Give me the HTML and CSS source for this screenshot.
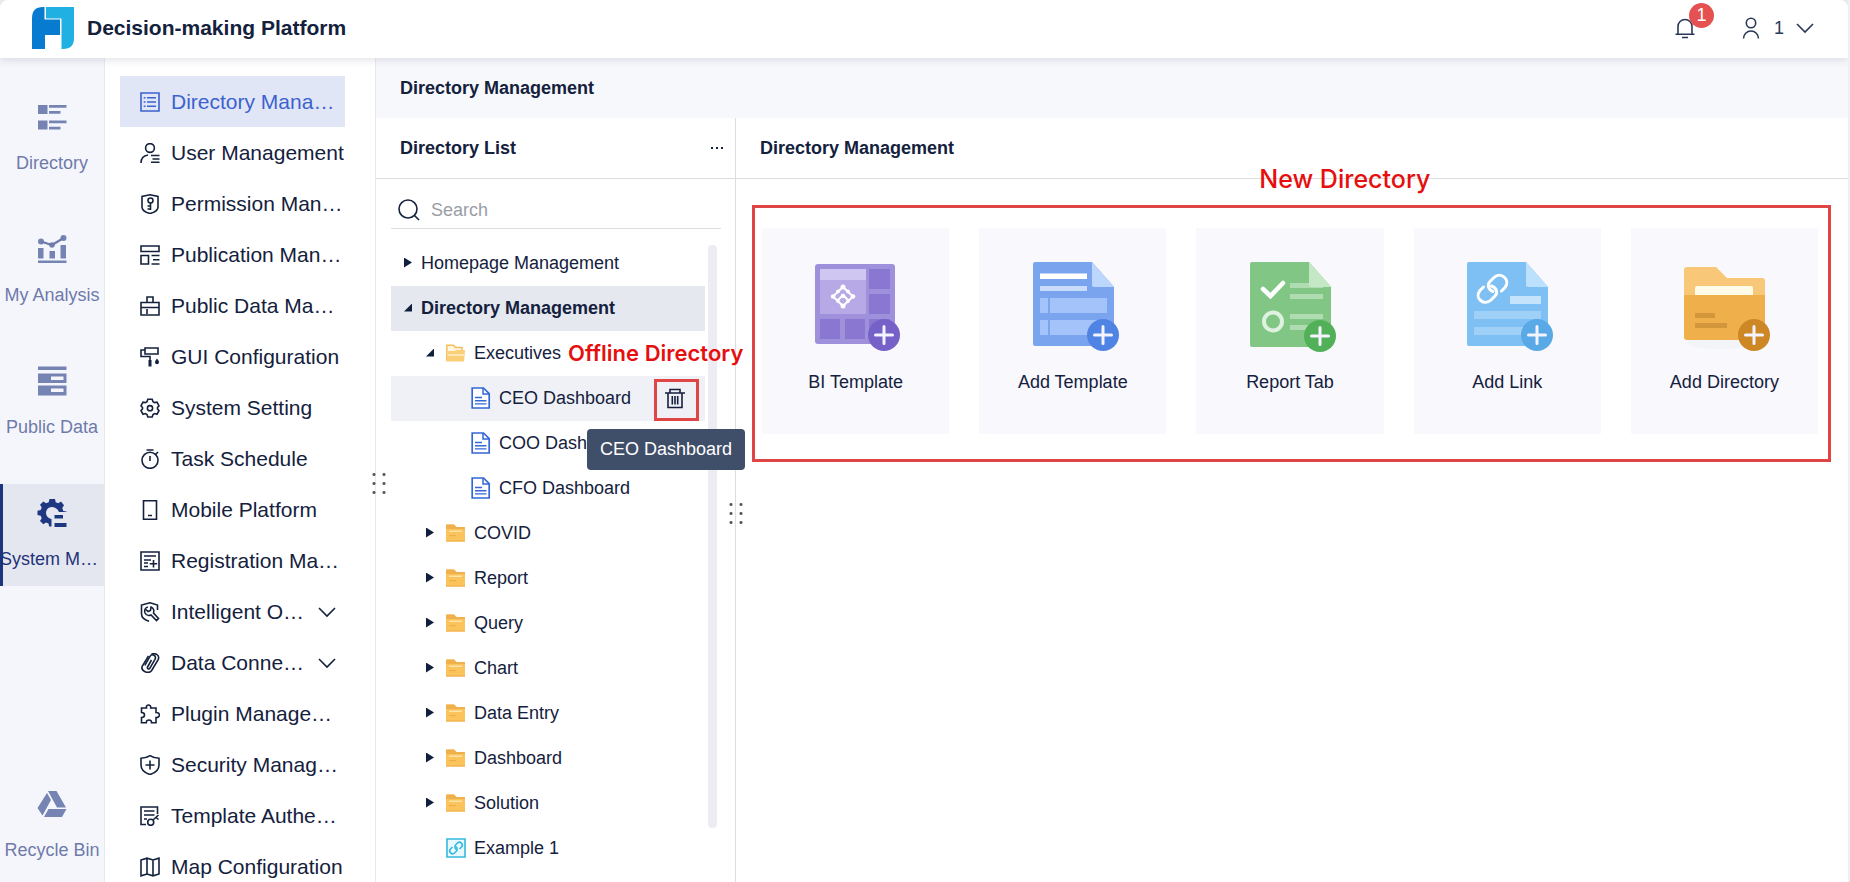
FILE: index.html
```
<!DOCTYPE html>
<html lang="en">
<head>
<meta charset="utf-8">
<title>Decision-making Platform</title>
<meta name="viewport" content="width=device-width, initial-scale=1">
<link rel="stylesheet" href="styles.css">
</head>
<body>
<svg class="defs" aria-hidden="true">
  <symbol id="chevron" viewBox="0 0 18 18"><path d="M1 5l8 8 8-8"/></symbol>
  <symbol id="folder" viewBox="0 0 20 18">
    <path d="M0 1.5Q0 .5 1 .5H8L10.500 3H19V17.500H0Z" fill="#fbc35c"/>
    <path d="M0 1.500Q0 .5 1 .5H8L10.500 3H19V5H0Z" fill="#efb04e"/>
    <path d="M3 6.500H16V8H3Z" fill="#fee3a6"/>
    <path d="M3 11H10V12.200H3ZM0 16.500H19V17.500H0Z" fill="#f0ae48"/>
  </symbol>
  <symbol id="doc" viewBox="0 0 20 22">
    <path d="M1.200 1H12.500L18.200 6.700V21H1.200Z" fill="#fff" stroke="#3567d6" stroke-width="1.700"/>
    <path d="M12 1V7H18.200" fill="none" stroke="#3567d6" stroke-width="1.500"/>
    <path d="M4 10.500H11M4 13.700H15.500M4 16.900H15.500" stroke="#3567d6" stroke-width="1.400"/>
  </symbol>
  <symbol id="plus" viewBox="0 0 34 34">
    <circle cx="17" cy="17" r="16"/>
    <path d="M17 8.500V25.500M8.500 17H25.500" stroke="#f3f4ff" stroke-width="3" stroke-linecap="round"/>
  </symbol>
</svg>

<div class="app">
  <header class="header">
    <svg class="logo" viewBox="0 0 42 42" aria-hidden="true">
      <path d="M11 0H12.500V12.500H28V28H13V42H0V11Q0 0 11 0Z" fill="#067bd0"/>
      <path d="M14 0H42V31Q42 42 31 42H29.500V11.500H14Z" fill="#20b0e2"/>
    </svg>
    <h1 class="brand">Decision-making Platform</h1>
    <button class="bell" type="button" aria-label="Notifications">
      <svg class="icon22 line" viewBox="0 0 22 22"><path d="M4 17V9.500a7 7 0 0 1 14 0V17M1.500 17.200H20.500M8 20.500H14"/></svg>
      <span class="badge">1</span>
    </button>
    <button class="account" type="button">
      <svg class="icon22 line" viewBox="0 0 22 22"><circle cx="11" cy="6" r="4.700"/><path d="M3.500 21.500a7.500 7.500 0 0 1 15 0"/></svg>
      <span>1</span>
      <svg class="icon18 line"><use href="#chevron"/></svg>
    </button>
  </header>

  <div class="body">
    <nav class="rail" aria-label="Modules">
      <button class="rail-item" type="button">
        <svg viewBox="0 0 30 30"><path d="M1 3H10.500V12H1ZM12 3H29.500V5.800H12ZM12 9H23.500V11.800H12ZM1 18.500H10.500V27.500H1ZM12 18.500H29.500V21.300H12ZM12 24.700H23.500V27.500H12Z"/></svg>
        <span class="rail-label">Directory</span>
      </button>
      <button class="rail-item" type="button">
        <svg viewBox="0 0 30 30"><path d="M1 14H6.500V24.500H1ZM12.500 17H18V24.500H12.500ZM23.500 11H29V24.500H23.500ZM1 26.500H29.500V29H1Z"/><circle cx="4" cy="7.500" r="3"/><circle cx="15" cy="11" r="2.800"/><circle cx="26.500" cy="4" r="3"/><path d="M4 7.500L15 11L26.500 4" fill="none" stroke="currentColor" stroke-width="2.200"/></svg>
        <span class="rail-label">My Analysis</span>
      </button>
      <button class="rail-item" type="button">
        <svg viewBox="0 0 30 30"><path fill-rule="evenodd" d="M1 .5H29.500V4H1ZM1 7.500H29.500V17H1ZM14 10.500V14H26.500V10.500ZM1 19.500H29.500V29.500H1ZM14 22.500V26H26.500V22.500Z"/></svg>
        <span class="rail-label">Public Data</span>
      </button>
      <button class="rail-item selected" type="button">
        <svg viewBox="0 0 30 30">
          <path d="M12.500 1H18L18.700 4.200L21.200 5.300L24 3.600L27 7.200L25.300 10L26.300 13L29.500 13.500V14H22C20.500 10.500 17.500 9 15 9C11.500 9 9 11.500 9 15C9 18 11 20.300 14.500 21V28.500H12.200L11.500 25.600L9 24.600L6.300 26.300L3 23L4.700 20.300L3.700 17.700L.5 17V12.700L3.700 12L4.700 9.500L3 6.700L6.300 3.500L9 5.200L11.700 4.200Z"/>
          <path d="M17.500 17H26V20.500H17.500ZM17.500 25H29.500V29H17.500Z"/>
        </svg>
        <span class="rail-label">System Management</span>
      </button>
      <button class="rail-item last" type="button">
        <svg viewBox="0 0 30 30"><path d="M11 2H19.500L29 18.500H20ZM10 4L14 11L5.500 26.500L.5 19ZM11.500 20H29.500L25 28H7Z"/></svg>
        <span class="rail-label">Recycle Bin</span>
      </button>
    </nav>

    <nav class="menu" aria-label="System management">
      <button class="menu-item selected" type="button">
        <svg class="line" viewBox="0 0 20 20"><path d="M1 1H19V19H1ZM7 5.700H16M7 10H16M7 14.300H16M3.700 5.700H5.500M3.700 10H5.500M3.700 14.300H5.500"/></svg>
        <span>Directory Management</span>
      </button>
      <button class="menu-item" type="button">
        <svg class="line" viewBox="0 0 20 20"><circle cx="10" cy="5" r="4.400"/><path d="M1 20C1 15.500 3.500 12.700 8 12M11 12.500H19.500M12.500 16H19.500M11 19.300H19.500"/></svg>
        <span>User Management</span>
      </button>
      <button class="menu-item" type="button">
        <svg class="line" viewBox="0 0 20 20"><path d="M10 .8L18 2.500V13C18 16 14 18.500 10 19.500C6 18.500 2 16 2 13V2.500Z"/><circle cx="10.500" cy="6.500" r="2.500"/><path d="M10.500 9V16M10.500 12H7.500M10.500 15H7.500"/></svg>
        <span>Permission Management</span>
      </button>
      <button class="menu-item" type="button">
        <svg class="line" viewBox="0 0 20 20"><path d="M1 1H19V6.500H1ZM1 10.500H8.500V19H1ZM11.500 10.500H19.500M13 14.700H19.500M11.500 19H19.500"/></svg>
        <span>Publication Management</span>
      </button>
      <button class="menu-item" type="button">
        <svg class="line" viewBox="0 0 20 20"><path d="M7 6.500V1H13V6.500M1 6.500H19V19H1ZM1 11.500H19M7 13V18"/></svg>
        <span>Public Data Management</span>
      </button>
      <button class="menu-item" type="button">
        <svg class="line" viewBox="0 0 20 20"><path d="M5 1H18V7H5ZM5 3H1V9.500H10V13"/><path class="solid" d="M8.500 13H11.500V19.500H8.500ZM17 11.500C18 13 19 14 19 15.200A1.900 1.900 0 0 1 15 15.200C15 14 16 13 17 11.500Z"/></svg>
        <span>GUI Configuration</span>
      </button>
      <button class="menu-item" type="button">
        <svg class="line" viewBox="0 0 20 20"><path d="M7.800 1.300H12.200L13 3.700L14.600 4.600L17 4.100L19 7.800L17.500 9.500V11L19 12.600L17 16.200L14.600 15.500L13 16.500L12.200 19H7.800L7 16.500L5.400 15.500L3 16.200L1 12.600L2.500 11V9.500L1 7.800L3 4.100L5.400 4.600L7 3.700Z"/><circle cx="10" cy="10.200" r="2.600"/></svg>
        <span>System Setting</span>
      </button>
      <button class="menu-item" type="button">
        <svg class="line" viewBox="0 0 20 20"><circle cx="10" cy="11.300" r="8"/><path d="M6.500 1H13.500M10 7V12M15.500 5.500L18 3"/></svg>
        <span>Task Schedule</span>
      </button>
      <button class="menu-item" type="button">
        <svg class="line" viewBox="0 0 20 20"><path d="M3.500 .8H16.500V19.200H3.500ZM8 15.500H12"/></svg>
        <span>Mobile Platform</span>
      </button>
      <button class="menu-item" type="button">
        <svg class="line" viewBox="0 0 20 20"><path d="M1 1H19V19H1ZM4 5H16M4 9H11M4 12H8M4 15.500H8M13.500 9V16.500M9.700 12.800H17.200"/></svg>
        <span>Registration Management</span>
      </button>
      <button class="menu-item" type="button" aria-expanded="false">
        <svg class="line" viewBox="0 0 20 20"><path d="M17.500 8V3L10 .8L1.500 3V12C1.500 15.500 5 18 9 19.300"/><path d="M8 5C5 5.500 4 8.500 5 11C6 13 8.500 14 11 13L16.500 18.500L18.500 16.500L13.500 11C14.500 8.500 13.500 6 11 5L10.500 8.500L8 9.500L6 7.500"/></svg>
        <span>Intelligent Operations</span>
        <svg class="icon18 line arrow"><use href="#chevron"/></svg>
      </button>
      <button class="menu-item" type="button" aria-expanded="false">
        <svg class="line" viewBox="0 0 20 20"><path d="M11.500 7L7.500 14C6.700 15.500 9 16.800 9.900 15.200L15 6.300C17 2.500 11.800 .2 10 3.300L4.800 12.300" /><path d="M11.500 1.500C14.500 -.8 20 2 18.300 6.300L11.500 17.700C8.500 21.500 .5 18 2.200 13.300L8.500 3"/></svg>
        <span>Data Connection</span>
        <svg class="icon18 line arrow"><use href="#chevron"/></svg>
      </button>
      <button class="menu-item" type="button">
        <svg class="line" viewBox="0 0 20 20"><path d="M1.500 4H6.500C5.500 0 11.500 0 10.700 4H16V8.500C20.500 8 20.500 14 16 13.500V18.700H11.500C12 15 6 15 6.300 18.700H1.500V13.500C5.500 13.500 5.500 8.500 1.500 8.500Z"/></svg>
        <span>Plugin Management</span>
      </button>
      <button class="menu-item" type="button">
        <svg class="line" viewBox="0 0 20 20"><path d="M10 .7C12.500 2.500 15.500 3.300 19 3.300V10C19 15 15 18 10 19.500C5 18 1 15 1 10V3.300C4.500 3.300 7.500 2.500 10 .7ZM10 5.500V14.500M5.500 10H14.500"/></svg>
        <span>Security Management</span>
      </button>
      <button class="menu-item" type="button">
        <svg class="line" viewBox="0 0 20 20"><path d="M17.500 8V1H1V18.500H6M4 5H14.500M4 9H14.500M4 13H7"/><circle cx="10.700" cy="16.300" r="3"/><path d="M13 14L18.500 9M16 11.500L18.500 13.500"/></svg>
        <span>Template Authentication</span>
      </button>
      <button class="menu-item" type="button">
        <svg class="line" viewBox="0 0 20 20"><path d="M1 3L7 1.200L13 3L19 1.200V17L13 18.800L7 17L1 18.800ZM7 1.200V17M13 3V18.800"/></svg>
        <span>Map Configuration</span>
      </button>
      <span class="grip" aria-hidden="true"></span>
    </nav>

    <div class="content">
      <div class="tabbar">Directory Management</div>
      <div class="panels">
        <section class="list">
          <header class="panel-head">
            <h2>Directory List</h2>
            <button class="more" type="button" aria-label="More"><i></i><i></i><i></i></button>
          </header>
          <label class="search">
            <svg class="line" viewBox="0 0 22 22" aria-label="Search"><circle cx="10" cy="10" r="9"/><path d="M16.500 16.500L21 21"/></svg>
            <input type="text" placeholder="Search">
          </label>
          <div class="scroll">
            <ul class="tree">
              <li class="row"><i class="caret"></i>Homepage Management</li>
              <li class="row current"><i class="caret open"></i>Directory Management</li>
              <li class="row level2"><i class="caret open"></i>
                <svg class="folder" viewBox="0 0 20 18"><path d="M.8 17V1.200H7.500L9.500 3.500H16V7" fill="#fff6df" stroke="#f5bd5c" stroke-width="1.500"/><path d="M.5 17.500L2.500 7H9L10 6H19L18 17.500Z" fill="#fbcf77"/><path d="M2 11H18" stroke="#fff1cb" stroke-width="1.500"/></svg>Executives
                <span class="note note-offline">Offline Directory</span>
              </li>
              <li class="row level3 hover"><svg class="doc"><use href="#doc"/></svg>CEO Dashboard
                <button class="trash" type="button" aria-label="Take offline"><svg class="line" viewBox="0 0 22 22"><path d="M1 5H21M6 5V1.500H16V5M4 5V19.500H18V5M8.300 8V16.500M11 8V16.500M13.700 8V16.500"/></svg></button>
                <span class="tooltip" role="tooltip">CEO Dashboard</span>
              </li>
              <li class="row level3"><svg class="doc"><use href="#doc"/></svg>COO Dashboard</li>
              <li class="row level3"><svg class="doc"><use href="#doc"/></svg>CFO Dashboard</li>
              <li class="row level2"><i class="caret"></i><svg class="folder"><use href="#folder"/></svg>COVID</li>
              <li class="row level2"><i class="caret"></i><svg class="folder"><use href="#folder"/></svg>Report</li>
              <li class="row level2"><i class="caret"></i><svg class="folder"><use href="#folder"/></svg>Query</li>
              <li class="row level2"><i class="caret"></i><svg class="folder"><use href="#folder"/></svg>Chart</li>
              <li class="row level2"><i class="caret"></i><svg class="folder"><use href="#folder"/></svg>Data Entry</li>
              <li class="row level2"><i class="caret"></i><svg class="folder"><use href="#folder"/></svg>Dashboard</li>
              <li class="row level2"><i class="caret"></i><svg class="folder"><use href="#folder"/></svg>Solution</li>
              <li class="row level2"><i class="caret none"></i>
                <svg class="folder link" viewBox="0 0 20 20"><path d="M1 1H19V19H1Z" fill="#e9f9fe" stroke="#36b9de" stroke-width="1.600"/><g fill="none" stroke="#36b9de" stroke-width="1.600"><path d="M10.500 11.500C8.500 10.500 8.500 8 9.700 6.800L11.500 5C14 2.700 18 6.300 15.500 9L13.500 11"/><path d="M9.500 8.500C11.500 9.500 11.500 12 10.300 13.200L8.500 15C6 17.300 2 13.700 4.500 11L6.500 9"/></g></svg>Example 1</li>
            </ul>
            <div class="thumb"></div>
          </div>
          <span class="grip" aria-hidden="true"></span>
        </section>

        <main class="main">
          <header class="panel-head"><h2>Directory Management</h2></header>
          <div class="cards">
            <span class="note note-new">New Directory</span>
            <button class="card" type="button">
              <svg viewBox="0 0 90 96">
                <rect x="4" y="6" width="80" height="80" rx="3" fill="#9f90dc"/>
                <path d="M58 11H79V31H58ZM58 36H79V56H58ZM9 61H29V81H9ZM34 61H54V81H34ZM58 61H79V81H58Z" fill="#8977d1"/>
                <path d="M9 11H55V56H9Z" fill="#b6a9e6"/><path d="M9 11H55V22H9Z" fill="#cfc7f1"/>
                <path d="M32 29L42 38.500L32 48L22 38.500ZM27 42L32 37L37 42" fill="none" stroke="#fff" stroke-width="2"/>
                <g fill="#fff"><circle cx="32" cy="29" r="2.500"/><circle cx="42" cy="38.500" r="2.300"/><circle cx="32" cy="48" r="2.500"/><circle cx="22" cy="38.500" r="2.300"/><circle cx="32" cy="38" r="2.300"/><circle cx="27" cy="33.500" r="1.900"/><circle cx="37" cy="33.500" r="1.900"/><circle cx="27" cy="43" r="1.900"/><circle cx="37" cy="43" r="1.900"/></g>
                <use href="#plus" x="56" y="60" width="34" height="34" fill="#7561c8"/>
              </svg>
              <span>BI Template</span>
            </button>
            <button class="card" type="button">
              <svg viewBox="0 0 90 96">
                <path d="M7 4H64L86 29V88H7Q5 88 5 86V6Q5 4 7 4Z" fill="#7aa5ee"/>
                <path d="M64 4L86 29H66Q64 29 64 27Z" fill="#bdd6fb"/>
                <path d="M12 15.500H59V21H12Z" fill="#fff"/><path d="M12 28H59V33H12Z" fill="#c9dcfc"/>
                <path d="M12 40H20V55H12ZM22 40H79V55H22ZM12 62H20V77H12ZM22 62H79V77H22Z" fill="#a3c3fa"/>
                <use href="#plus" x="58" y="60" width="34" height="34" fill="#4f83e4"/>
              </svg>
              <span>Add Template</span>
            </button>
            <button class="card" type="button">
              <svg viewBox="0 0 90 96">
                <path d="M7 4H64L86 29V89H7Q5 89 5 87V6Q5 4 7 4Z" fill="#82c685"/>
                <path d="M45 25H78V30H45ZM45 36H78V41H45ZM45 56H78V61H45ZM45 67H78V72H45Z" fill="#b0dcb1"/>
                <path d="M64 4L86 29H66Q64 29 64 27Z" fill="#c4e7c5"/>
                <path d="M18 31L25.500 38L38 25" fill="none" stroke="#fff" stroke-width="4.500" stroke-linecap="round"/>
                <circle cx="28" cy="63.500" r="9" fill="none" stroke="#dff2df" stroke-width="4"/>
                <use href="#plus" x="58" y="61" width="34" height="34" fill="#52b058"/>
              </svg>
              <span>Report Tab</span>
            </button>
            <button class="card" type="button">
              <svg viewBox="0 0 90 96">
                <path d="M7 4H64L86 29V88H7Q5 88 5 86V6Q5 4 7 4Z" fill="#7ec0f3"/>
                <path d="M64 4L86 29H66Q64 29 64 27Z" fill="#bce1fc"/>
                <g fill="none" stroke="#fff" stroke-width="3" stroke-linecap="round"><path d="M31 33.500C26 31.500 25 26.500 28 23.500L32 19.500C39 13 49 22 43 29.500L39.500 33"/><path d="M29.500 28C35 30 36 35 33 38L29 42C22 48.500 12 40 18 32.500L21.500 29"/></g>
                <path d="M48 38H79V46H48Z" fill="#c5e4fc"/><path d="M12 53H79V61H12ZM12 69H79V77H12Z" fill="#9fd1f8"/>
                <use href="#plus" x="58" y="60" width="34" height="34" fill="#58a9e6"/>
              </svg>
              <span>Add Link</span>
            </button>
            <button class="card" type="button">
              <svg viewBox="0 0 90 96">
                <ellipse cx="42" cy="85" rx="34" ry="6" fill="#f2f4f8"/>
                <path d="M8 9H37L48 20H83Q86 20 86 23V45H5V12Q5 9 8 9Z" fill="#f8c878"/>
                <path d="M18 28H72Q74 28 74 30V40H16V30Q16 28 18 28Z" fill="#fffbe6"/>
                <path d="M5 37H86V82H8Q5 82 5 79Z" fill="#efb04c"/>
                <path d="M16 55H36V60H16ZM16 65H48V70H16Z" fill="#d3963a"/>
                <use href="#plus" x="58" y="60" width="34" height="34" fill="#cd8724"/>
              </svg>
              <span>Add Directory</span>
            </button>
          </div>
        </main>
      </div>
    </div>
  </div>
</div>
</body>
</html>
```
FILE: styles.css
```
* { box-sizing: border-box; }

body {
  margin: 0;
  padding-right: 2px;
  background: #efeff1;
  color: #14213d;
  font: 18px/24px "Liberation Sans", Arial, sans-serif;
}

h1, h2, ul { margin: 0; padding: 0; font-size: inherit; list-style: none; }

button {
  margin: 0;
  padding: 0;
  border: 0;
  background: none;
  color: inherit;
  font: inherit;
  cursor: pointer;
}

svg { display: block; flex: none; }
.defs { position: absolute; width: 0; height: 0; }
.line { fill: none; stroke: currentColor; stroke-width: 1.6; }
.solid { fill: currentColor; stroke: none; }
.icon22 { width: 22px; height: 22px; }
.icon18 { width: 18px; height: 18px; }

.app { display: flex; flex-direction: column; height: 100vh; overflow: hidden; }

/* Header */
.header {
  position: relative;
  z-index: 2;
  flex: none;
  display: flex;
  align-items: center;
  height: 58px;
  padding: 0 34px 2px 32px;
  border-radius: 8px 8px 0 0;
  background: #fff;
  box-shadow: 0 2px 8px rgba(20, 20, 50, .12);
}
.logo { width: 42px; height: 42px; }
.brand { margin: 0 auto 0 13px; font-size: 21px; }
.bell { position: relative; margin-right: 44px; color: #2a3958; }
.badge {
  position: absolute;
  left: 15px;
  bottom: 11px;
  width: 25px;
  height: 25px;
  border-radius: 50%;
  background: #e55050;
  color: #fff;
  line-height: 25px;
}
.account { display: flex; align-items: center; gap: 12px; color: #2a3958; }

.body { flex: 1; display: flex; min-height: 0; }

/* Module rail */
.rail {
  flex: none;
  display: flex;
  flex-direction: column;
  gap: 30px;
  width: 105px;
  padding: 30px 0 5px;
  border-right: 1px solid #e9e9f0;
  background: #f5f6fb;
}
.rail-item {
  display: flex;
  flex-direction: column;
  align-items: center;
  gap: 19px;
  height: 102px;
  padding-top: 14px;
  color: #6f7aab;
}
.rail-item svg { width: 30px; height: 30px; fill: #7684b4; }
.rail-label {
  max-width: 100%;
  overflow: hidden;
  text-overflow: ellipsis;
  white-space: nowrap;
}
.rail-item.selected { background: #e5e7f0; box-shadow: inset 3px 0 #1c367e; color: #1f3478; }
.rail-item.selected svg { fill: #1d3880; }
.rail-item.last { margin-top: auto; }

/* Second-level menu */
.menu {
  position: relative;
  z-index: 1;
  flex: none;
  width: 271px;
  padding: 18px 30px 0 15px;
  border-right: 1px solid #e9e9ee;
  background: #fff;
}
.menu-item {
  display: flex;
  align-items: center;
  gap: 11px;
  width: 100%;
  height: 51px;
  padding-left: 20px;
  font-size: 21px;
  text-align: left;
}
.menu-item > svg:first-child { width: 20px; height: 20px; }
.menu-item span {
  flex: 1;
  overflow: hidden;
  text-overflow: ellipsis;
  white-space: nowrap;
}
.menu-item .arrow { margin-right: 9px; }
.menu-item.selected { background: #e1e6f7; color: #3c62cf; }

/* Resize handle: two columns of three dots */
.grip {
  position: absolute;
  right: -11px;
  top: 50%;
  width: 20px;
  height: 26px;
  background: radial-gradient(circle, #55565c 1px, transparent 2px) 0 0 / 10px 9px;
}
.menu .grip { right: -14px; }

/* Content */
.content { flex: 1; display: flex; flex-direction: column; min-width: 0; background: #fff; }
.tabbar { flex: none; height: 60px; padding: 0 24px; background: #f7f8fc; font-weight: bold; line-height: 60px; }
.panels { flex: 1; display: flex; min-height: 0; }
.panel-head {
  flex: none;
  display: flex;
  align-items: center;
  justify-content: space-between;
  height: 61px;
  padding: 0 12px 0 24px;
  border-bottom: 1px solid #dcdde0;
}

.list {
  position: relative;
  z-index: 1;
  flex: none;
  display: flex;
  flex-direction: column;
  width: 360px;
  border-right: 1px solid #dcdde0;
}
.more { display: flex; gap: 3px; }
.more i { width: 2px; height: 2px; background: currentColor; }
.search {
  display: flex;
  align-items: center;
  gap: 11px;
  height: 50px;
  margin: 0 14px 0 15px;
  padding: 13px 0 0 7px;
  border-bottom: 1px solid #dcdde0;
}
.search svg { width: 22px; height: 22px; }
.search input {
  flex: 1;
  min-width: 0;
  padding: 0;
  border: 0;
  outline: 0;
  background: none;
  color: inherit;
  font: inherit;
}
.search input::placeholder { color: #9a9da6; opacity: 1; }

.scroll { flex: 1; display: flex; gap: 3px; min-height: 0; padding: 12px 18px 0 15px; }
.thumb { width: 9px; height: 91%; margin-top: 4px; border-radius: 4px; background: #ececf2; }
.tree { flex: 1; }
.row { position: relative; display: flex; align-items: center; height: 45px; padding: 0 0 2px 13px; white-space: nowrap; }
.row.level2 { padding-left: 35px; }
.row.level3 { padding-left: 80px; }
.row.current { background: #e6e8f0; font-weight: bold; }
.row.hover { z-index: 1; background: #f0f1f7; }
.caret { width: 8px; height: 10px; margin-right: 9px; background: #0f1f3d; clip-path: polygon(0 0, 100% 50%, 0 100%); }
.caret.open { height: 8px; clip-path: polygon(100% 0, 100% 100%, 0 100%); }
.caret.none { background: none; }
.level2 .caret { margin-right: 12px; }
.folder { width: 20px; height: 18px; margin-right: 8px; }
.folder.link { height: 20px; }
.doc { width: 20px; height: 22px; margin-right: 8px; }
.trash {
  position: absolute;
  right: 6px;
  top: 3px;
  display: grid;
  place-items: center;
  width: 45px;
  height: 42px;
  padding: 0 3px 2px 0;
  border: 3px solid #e04545;
}
.trash svg { width: 22px; height: 22px; }
.tooltip {
  position: absolute;
  left: 196px;
  top: 53px;
  padding: 8px 13px;
  border-radius: 4px;
  background: #3f4e69;
  color: #fff;
  line-height: 25px;
}

.note { position: absolute; color: #e60f0f; font-family: Inter, sans-serif; font-weight: 500; white-space: nowrap; }
.note-offline { left: 177px; font-size: 22px; font-weight: 600; }
.note-new { left: 47%; top: -44px; font-size: 25px; line-height: 30px; }

/* Create cards */
.main { flex: 1; min-width: 0; }
.cards {
  position: relative;
  display: grid;
  grid-template-columns: repeat(5, 1fr);
  gap: 30px;
  margin: 26px 17px 0 16px;
  padding: 20px 10px 25px 7px;
  border: 3px solid #e04545;
}
.card {
  display: flex;
  flex-direction: column;
  align-items: center;
  gap: 16px;
  height: 206px;
  padding-top: 30px;
  background: #f8f8fd;
}
.card svg { width: 90px; height: 96px; overflow: visible; }
```
